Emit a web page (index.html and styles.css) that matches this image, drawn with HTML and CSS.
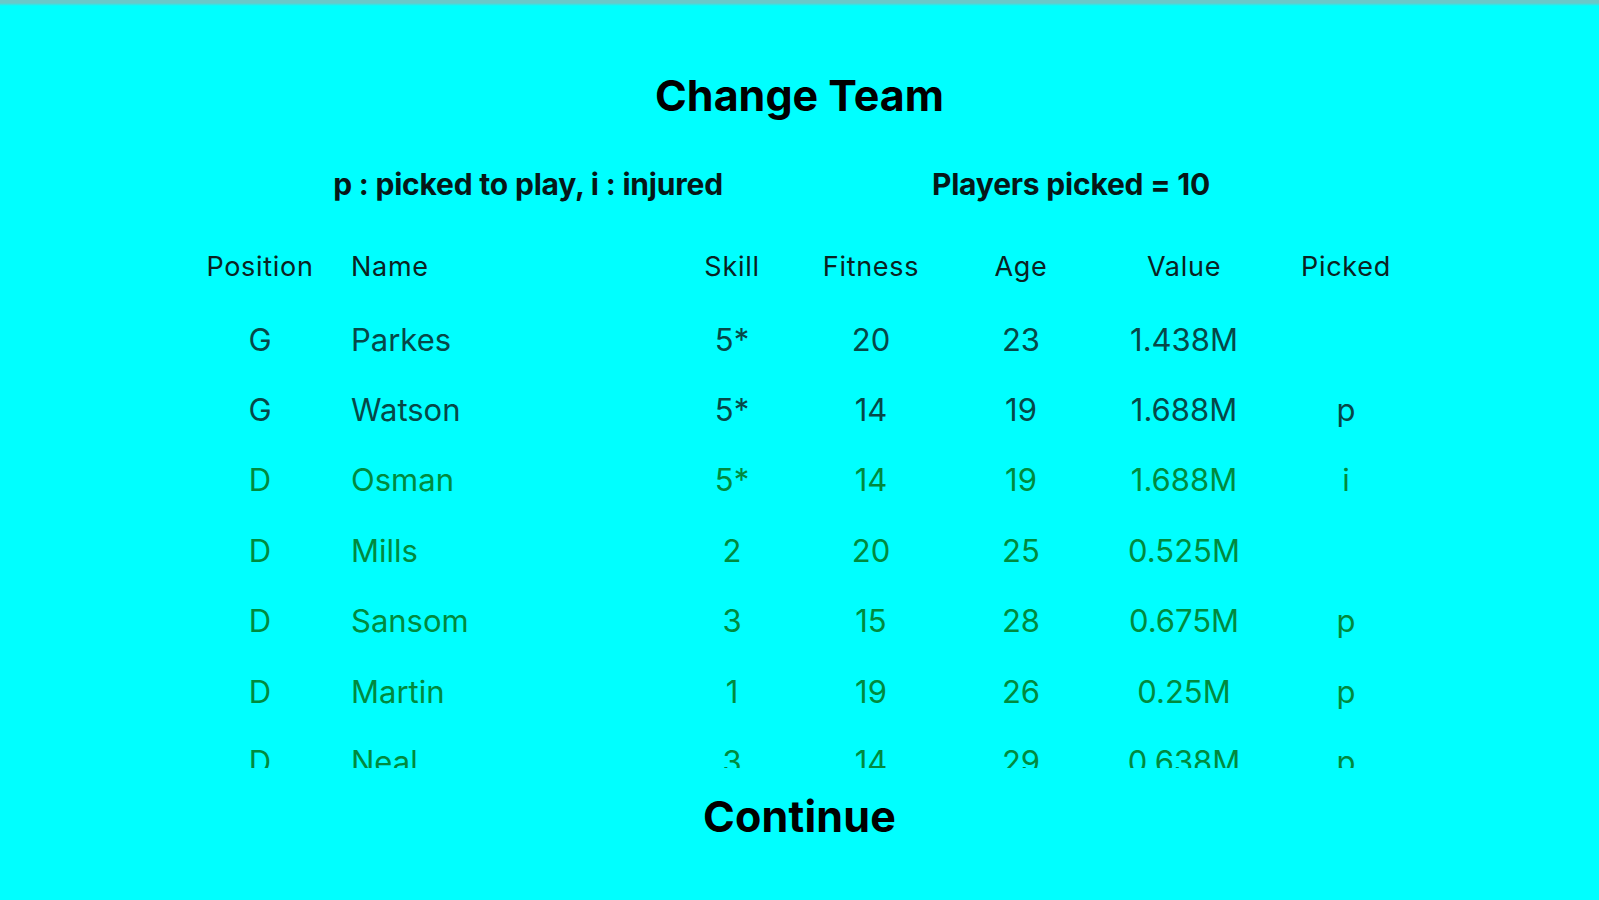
FILE: index.html
```html
<!DOCTYPE html>
<html lang="en">
<head>
<meta charset="utf-8">
<title>Change Team</title>
<link rel="stylesheet" href="styles.css">
</head>
<body>
<div class="topbar"></div>
<main class="screen">
  <h1 class="title">Change Team</h1>
  <div class="legend">
    <span>p : picked to play, i : injured</span>
    <span>Players picked = 10</span>
  </div>
  <div class="table">
    <div class="row head">
      <span class="c">Position</span><span class="n">Name</span><span class="c">Skill</span><span class="c">Fitness</span><span class="c">Age</span><span class="c">Value</span><span class="c">Picked</span>
    </div>
    <div class="scroll">
      <div class="row gk"><span class="c">G</span><span class="n">Parkes</span><span class="c">5*</span><span class="c">20</span><span class="c">23</span><span class="c">1.438M</span><span class="c"></span></div>
      <div class="row gk"><span class="c">G</span><span class="n">Watson</span><span class="c">5*</span><span class="c">14</span><span class="c">19</span><span class="c">1.688M</span><span class="c">p</span></div>
      <div class="row df"><span class="c">D</span><span class="n">Osman</span><span class="c">5*</span><span class="c">14</span><span class="c">19</span><span class="c">1.688M</span><span class="c">i</span></div>
      <div class="row df"><span class="c">D</span><span class="n">Mills</span><span class="c">2</span><span class="c">20</span><span class="c">25</span><span class="c">0.525M</span><span class="c"></span></div>
      <div class="row df"><span class="c">D</span><span class="n">Sansom</span><span class="c">3</span><span class="c">15</span><span class="c">28</span><span class="c">0.675M</span><span class="c">p</span></div>
      <div class="row df"><span class="c">D</span><span class="n">Martin</span><span class="c">1</span><span class="c">19</span><span class="c">26</span><span class="c">0.25M</span><span class="c">p</span></div>
      <div class="row df"><span class="c">D</span><span class="n">Neal</span><span class="c">3</span><span class="c">14</span><span class="c">29</span><span class="c">0.638M</span><span class="c">p</span></div>
    </div>
  </div>
  <div class="continue">Continue</div>
</main>
</body>
</html>
```

FILE: styles.css
```css
html, body {
  margin: 0;
  padding: 0;
  background: #00ffff;
  height: 100%;
  overflow: hidden;
}
body {
  font-family: Inter, "Liberation Sans", sans-serif;
  color: #000;
}
.topbar {
  height: 6px;
  background: linear-gradient(#6ac8c8 0, #6ac8c8 3px, #00ffff 6px);
}
.screen {
  display: flex;
  flex-direction: column;
}
.title {
  margin: 64px 0 0;
  height: 50px;
  line-height: 50px;
  font-size: 43px;
  font-weight: 700;
  text-align: center;
  color: #000;
}
.legend {
  margin-top: 48px;
  display: grid;
  grid-template-columns: 543px 543px;
  justify-content: center;
  height: 32px;
  line-height: 32px;
  font-size: 30px;
  font-weight: 700;
  letter-spacing: -0.2px;
  text-align: center;
  color: #061818;
}
.table {
  margin-top: 28px;
  padding-left: 190px;
}
.row {
  display: grid;
  grid-template-columns: 140px 332px 140px 138px 162px 164px 160px;
  height: 70.4px;
  align-items: center;
}
.row .c { text-align: center; }
.row .n { text-align: left; padding-left: 21px; }
.head {
  height: 76px;
  font-size: 27px;
  letter-spacing: 0.7px;
  color: #0b2222;
}
.scroll {
  height: 464px;
  overflow: hidden;
}
.gk, .df {
  font-size: 31px;
}
.gk { color: #064848; }
.df { color: #008a3e; }
.continue {
  margin-top: 23px;
  height: 50px;
  line-height: 50px;
  text-align: center;
  font-size: 43px;
  font-weight: 700;
  letter-spacing: 0.2px;
  color: #000;
}
```
